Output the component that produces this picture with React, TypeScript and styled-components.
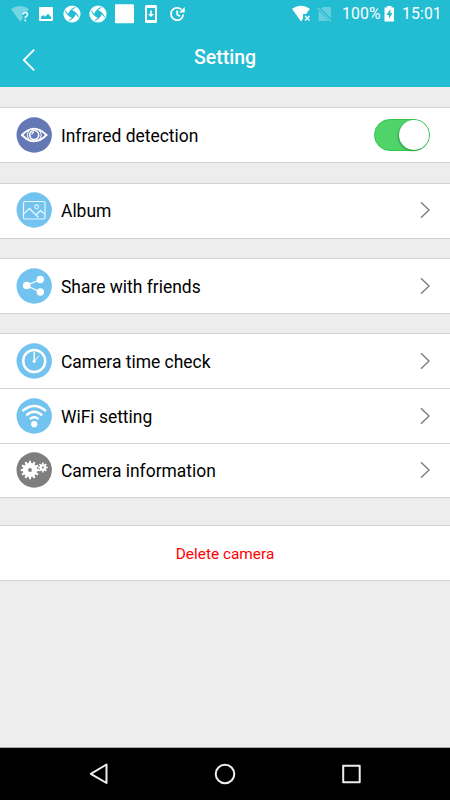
import React from 'react';
import styled, { createGlobalStyle } from 'styled-components';

const GlobalStyle = createGlobalStyle`
  * { box-sizing: border-box; }
  body { margin: 0; background: #ededed; font-family: Roboto, "Noto Sans", sans-serif; }
  svg { display: block; flex: none; }
`;

const Screen = styled.div`
  width: 450px;
  height: 800px;
  display: flex;
  flex-direction: column;
  overflow: hidden;
  background: #ededed;
`;

const Header = styled.header`
  height: 87px;
  flex: none;
  background: #22bcd3;
  color: #fff;
`;

const StatusBar = styled.div`
  height: 27px;
  display: flex;
  align-items: center;
  padding: 0 10px 0 11px;
`;

const StatusGroup = styled.div<{ $gap: number }>`
  display: flex;
  align-items: center;
  gap: ${(p) => p.$gap}px;
  margin-right: -0.7px;
`;

const StatusText = styled.span<{ $width: number }>`
  width: ${(p) => p.$width}px;
  font-size: 15.8px;
  line-height: 27px;
  letter-spacing: 0.1px;
  white-space: nowrap;
`;

const Spacer = styled.div`
  flex: 1;
`;

const TitleBar = styled.div`
  height: 60px;
  display: grid;
  grid-template-columns: 60px 1fr 60px;
`;

const BackButton = styled.button`
  display: flex;
  align-items: flex-start;
  border: 0;
  padding: 21px 0 0 21px;
  background: none;
`;

const Title = styled.h1`
  margin: 0;
  padding-top: 19px;
  font-size: 19.5px;
  line-height: 24px;
  font-weight: 500;
  text-align: center;
`;

const Content = styled.main`
  flex: 1;
`;

const Group = styled.section<{ $top: number }>`
  margin-top: ${(p) => p.$top}px;
  background: #fff;
  border-top: 1px solid #d2d2d2;
  border-bottom: 1px solid #d2d2d2;
`;

const Row = styled.div<{ $lift?: number; $height?: number; $divided?: boolean }>`
  height: ${(p) => p.$height ?? 54}px;
  display: flex;
  align-items: center;
  padding: 0 19px ${(p) => p.$lift ?? 0}px 16px;
  border-top: ${(p) => (p.$divided ? '1px solid #d6d6d6' : '0')};
`;

const Label = styled.span`
  flex: 1;
  padding: 2px 0 0 9px;
  font-size: 17.45px;
  line-height: 24px;
  color: #000;
`;

const DeleteButton = styled.button`
  width: 100%;
  height: 54px;
  display: block;
  border: 0;
  padding: 2px 0 0;
  background: #fff;
  color: #f00;
  font: 400 15.4px/24px Roboto, sans-serif;
`;

const Toggle = styled.div`
  width: 56px;
  height: 32px;
  display: flex;
  justify-content: flex-end;
  border-radius: 16px;
  background: #50d369;
  border: 1px solid #30c94e;
  margin-right: 1px;
`;

const Knob = styled.div`
  width: 30px;
  height: 30px;
  border-radius: 50%;
  background: #fff;
  box-shadow: -1px 1px 2px rgba(0, 80, 20, 0.4);
`;

const NavBar = styled.nav`
  height: 53px;
  flex: none;
  display: flex;
  justify-content: space-between;
  border-top: 1px solid #aaa;
  padding: 15px 88px 0;
  background: #000;
`;

const Shutter = () => (
  <svg width="18" height="18" viewBox="-9 -9 18 18">
    <circle r="8.6" fill="#fff" />
    <circle r="2.9" fill="#22bcd3" />
    {[0, 90, 180, 270].map((a) => (
      <path key={a} transform={`rotate(${a})`} d="M-3.500.5Q-2.600-4.500 3.400-6.800Q-.5-4.500-.6-2Z" fill="#22bcd3" stroke="#22bcd3" strokeWidth=".6" />
    ))}
  </svg>
);

const Disc = ({ color, children }: { color: string; children: React.ReactNode }) => (
  <svg width="36" height="36" viewBox="0 0 36 36" fill="none" stroke="#fff">
    <circle cx="18.2" cy="18" r="17.7" fill={color} stroke="none" />
    {children}
  </svg>
);

const Chevron = () => (
  <svg width="12" height="18" viewBox="0 0 12 18" fill="none" stroke="#7d7d7d" strokeWidth="1.4">
    <path d="M2 1.2L10 9L2 16.8" />
  </svg>
);

const gear = (teeth: number, outer: number, inner: number) => {
  const step = (Math.PI * 2) / teeth;
  const points: string[] = [];
  for (let i = 0; i < teeth; i++) {
    [[-0.3, inner], [-0.2, outer], [0.2, outer], [0.3, inner]].forEach(([k, r]) => {
      const a = (i + k) * step;
      points.push(`${(r * Math.cos(a)).toFixed(2)},${(r * Math.sin(a)).toFixed(2)}`);
    });
  }
  return points.join(' ');
};

const EyeIcon = () => (
  <Disc color="#6478b5">
    <path d="M6 18Q18 5.500 30.500 18Q18 30.500 6 18Z" strokeWidth="1.900" />
    <path d="M13 14Q9.500 18 13 22M23.500 14Q27 18 23.500 22" strokeWidth="1" />
    <circle cx="18.200" cy="18" r="4.500" strokeWidth="1.600" />
    <path d="M15.700 17.500A2.500 2.500 0 0 1 18 15.300" strokeWidth="1.200" />
  </Disc>
);

const AlbumIcon = () => (
  <Disc color="#72c3ef">
    <g stroke="#e8f6fd">
      <rect x="7.500" y="9.500" width="21.500" height="17.500" rx="1.500" strokeWidth="1.200" />
      <circle cx="20.700" cy="14.800" r="1.900" strokeWidth="1.100" />
      <path d="M8 21.500L13.500 16.500L22.500 25.500M20.500 22.500L24.500 18.500L28.500 22" strokeWidth="1.300" />
    </g>
  </Disc>
);

const ShareIcon = () => (
  <Disc color="#72c3ef">
    <path d="M24 11.500L10.500 17.500L24 24" strokeWidth="1.200" />
    <g fill="#fff" stroke="none">
      <circle cx="10.700" cy="17.500" r="3.800" />
      <circle cx="24.300" cy="11.500" r="3.700" />
      <circle cx="24.300" cy="24" r="3.700" />
    </g>
  </Disc>
);

const ClockIcon = () => (
  <Disc color="#72c3ef">
    <circle cx="18.200" cy="18" r="11" strokeWidth="2.500" />
    <path d="M18.300 9V18" strokeWidth="1.400" />
    <path d="M18.700 17.500L23 13" strokeWidth="1" />
    <circle cx="18.200" cy="18.300" r="1.600" fill="#fff" stroke="none" />
  </Disc>
);

const WifiIcon = () => (
  <Disc color="#72c3ef">
    <g strokeWidth="2.400">
      <path d="M6.400 13Q18.200 2.800 30 13" />
      <path d="M10.200 17.300Q18.200 10.200 26.200 17.300" />
      <path d="M13.800 21.100Q18.200 17.500 22.600 21.100" />
    </g>
    <circle cx="18.200" cy="26.200" r="3.100" fill="#fff" stroke="none" />
  </Disc>
);

const GearsIcon = () => (
  <Disc color="#7e7e7e">
    <polygon transform="translate(14 18)" points={gear(12, 9.3, 7.2)} fill="#fff" stroke="none" />
    <circle cx="14" cy="18" r="1.900" fill="#7e7e7e" stroke="none" />
    <polygon transform="translate(26.900 15.500)" points={gear(8, 5, 3.4)} fill="#fff" stroke="none" />
    <circle cx="26.900" cy="15.500" r="1.100" fill="#7e7e7e" stroke="none" />
  </Disc>
);

export default function App() {
  return (
    <Screen>
      <GlobalStyle />
      <Header>
        <StatusBar>
          <StatusGroup $gap={0}>
            <svg width="28" height="18" viewBox="11 4 28 18">
              <path d="M11 8Q20 2 29 8L27 11Q21.500 9.500 22 14.500L23 17.500L20 20.500Z" fill="#74d5e3" />
              <path d="M23 13.700Q23.200 11.500 25.200 11.500Q27.500 11.500 27.500 13.500Q27.500 15 25.300 16.300V17.300M25.300 18.600V20.300" fill="none" stroke="#f0fcfe" strokeWidth="1.600" />
            </svg>
            <svg width="25" height="18" viewBox="39 4 25 18">
              <rect x="39" y="6" width="14" height="14" rx="1" fill="#fff" />
              <path d="M41 18V16L43.300 14L45 15.700L48 12.800L51 16V18Z" fill="#22bcd3" />
            </svg>
          </StatusGroup>
          <StatusGroup $gap={8}>
            <Shutter />
            <Shutter />
            <svg width="19" height="20" viewBox="0 0 19 20"><rect y=".2" width="19" height="19" rx="1" fill="#fff" /></svg>
          </StatusGroup>
          <svg width="52" height="20" viewBox="134 3 52 20">
            <rect x="145" y="4" width="12" height="18" rx="1.500" fill="#fff" />
            <path d="M147 7H155V19H147Z" fill="#22bcd3" />
            <path d="M150.200 9.500H151.800V13H154L151 16L148 13H150.200Z" fill="#fff" />
            <path d="M181.400 8.500A6.200 6.200 0 1 0 183.300 13.500M177.200 9.500V13.500L180 15.200" fill="none" stroke="#fff" strokeWidth="1.800" />
            <path d="M184.700 6V11.500H179.200Z" fill="#fff" />
          </svg>
          <Spacer />
          <svg width="51" height="20" viewBox="291 3 51 20">
            <path d="M292 7.800Q301 1.500 310 7.800L306 13H303V17.500L301 20.500Z" fill="#fff" />
            <path d="M305 15L309.500 19.500M309.500 15L305 19.500" stroke="#fff" strokeWidth="1.300" />
            <path d="M323 6H331V17.300L321 7.600Z" fill="#65cfdf" />
            <path d="M318.700 10L329 20H318.700Z" fill="#65cfdf" />
            <path d="M317.800 7L331 20.500" stroke="#65cfdf" strokeWidth="1.300" />
          </svg>
          <StatusText $width={42}>100%</StatusText>
          <svg width="18" height="20" viewBox="384 3 18 20">
            <path d="M384.500 6.500H387V5H391.500V6.500H394V20.500H384.500Z" fill="#fff" />
            <path d="M390.300 8L386.500 14H389V18L392.500 12H390.300Z" fill="#22bcd3" />
          </svg>
          <StatusText $width={38}>15:01</StatusText>
        </StatusBar>
        <TitleBar>
          <BackButton aria-label="Back">
            <svg width="16" height="24" viewBox="0 0 16 24" fill="none" stroke="#fff" strokeWidth="1.800">
              <path d="M13.200 1.700L2.800 12L13.200 22.300" />
            </svg>
          </BackButton>
          <Title>Setting</Title>
        </TitleBar>
      </Header>
      <Content>
        <Group $top={20}>
          <Row><EyeIcon /><Label>Infrared detection</Label><Toggle><Knob /></Toggle></Row>
        </Group>
        <Group $top={20}>
          <Row $lift={2}><AlbumIcon /><Label>Album</Label><Chevron /></Row>
        </Group>
        <Group $top={19}>
          <Row $lift={1}><ShareIcon /><Label>Share with friends</Label><Chevron /></Row>
        </Group>
        <Group $top={19}>
          <Row><ClockIcon /><Label>Camera time check</Label><Chevron /></Row>
          <Row $height={55} $divided $lift={1}><WifiIcon /><Label>WiFi setting</Label><Chevron /></Row>
          <Row $divided $lift={1}><GearsIcon /><Label>Camera information</Label><Chevron /></Row>
        </Group>
        <Group $top={27}>
          <DeleteButton>Delete camera</DeleteButton>
        </Group>
      </Content>
      <NavBar>
        <svg width="22" height="22" viewBox="0 0 22 22" fill="none" stroke="#eee" strokeWidth="2" strokeLinejoin="round">
          <path d="M18.500 1.500V20L2.800 10.800Z" />
        </svg>
        <svg width="22" height="22" viewBox="0 0 22 22" fill="none" stroke="#eee" strokeWidth="2">
          <circle cx="11" cy="11" r="9.300" />
        </svg>
        <svg width="22" height="22" viewBox="0 0 22 22" fill="none" stroke="#eee" strokeWidth="2" strokeLinejoin="round">
          <rect x="3.200" y="2.700" width="16.500" height="16.500" />
        </svg>
      </NavBar>
    </Screen>
  );
}
